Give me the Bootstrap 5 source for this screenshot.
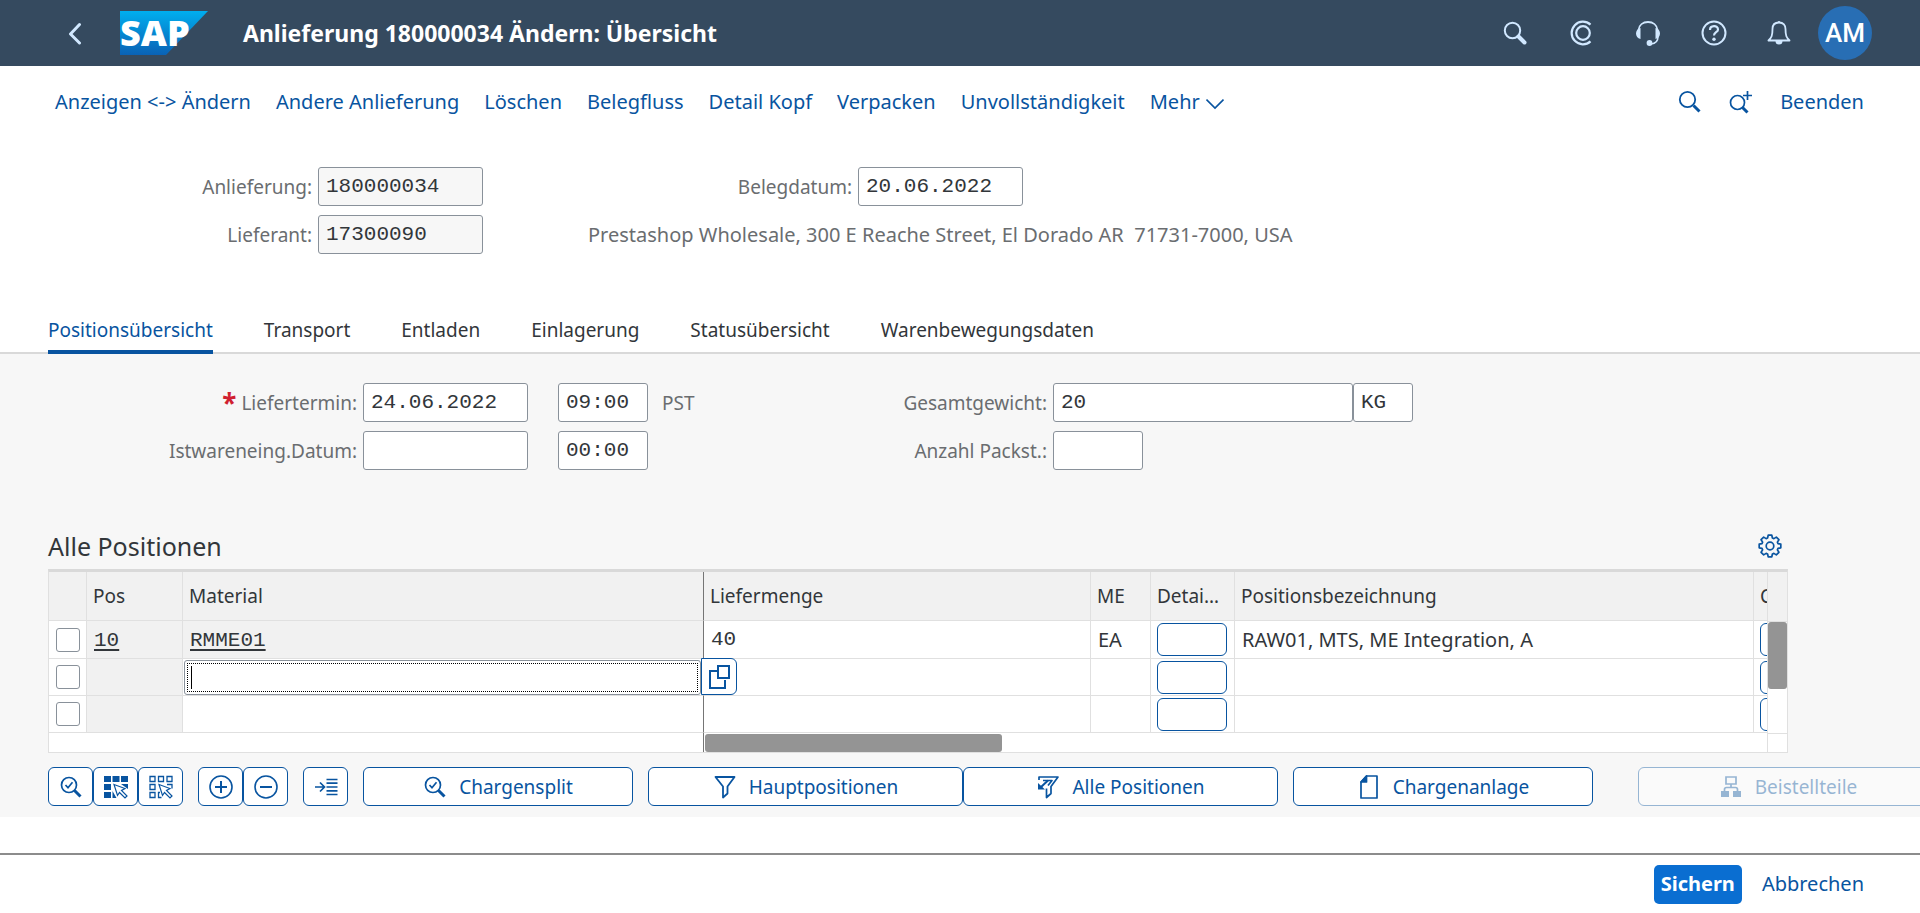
<!DOCTYPE html>
<html lang="de">
<head>
<meta charset="utf-8">
<meta name="viewport" content="width=device-width, initial-scale=1">
<title>Anlieferung 180000034 Ändern: Übersicht</title>
<link href="https://cdn.jsdelivr.net/npm/bootstrap@5.3.0/dist/css/bootstrap.min.css" rel="stylesheet">
<style>
:root { --brand: #0854a0; --ink: #32363a; --soft: #6a6d70; --line: #e0e0e0; --edge: #89919a; }
body { font-family: "Noto Sans", "Liberation Sans", sans-serif; font-size: 19px; line-height: 24px; color: var(--ink); background: #fff; overflow-x: hidden; }
svg { display: block; flex: none; }
a { color: var(--brand); text-decoration: none; white-space: nowrap; }
label, .soft { color: var(--soft); white-space: nowrap; }
.shell { background: #354a5f; height: 66px; padding: 0 48px 0 63px; color: #d1e8ff; }
.shell h1 { font-size: 23px; line-height: 30px; font-weight: 700; color: #fff; margin: 0 0 0 35px; }
.shell button { border: 0; background: none; padding: 0; color: #d1e8ff; }
.logo { margin-left: 33px; overflow: visible; }
.tools { gap: 42px; }
.tools-end { gap: 27px; }
.tool { width: 24px; }
.shell .avatar { width: 54px; height: 54px; border-radius: 50%; background: #286eb4; color: #fff; font-family: Roboto, sans-serif; font-size: 26px; font-weight: 500; }
.menu, .address, .items td, .foot { font-size: 20px; }
.menu { height: 72px; padding: 0 56px 0 55px; }
.menu-links { gap: 25px; }
.menu button { border: 0; background: none; padding: 0; color: var(--brand); }
.menu .more { gap: 6px; }
.menu .next { margin: 0 26px; }
.fields { display: grid; gap: 9px 6px; align-items: center; padding-left: 48px; }
.fields label { text-align: right; }
.fields-head { grid-template-columns: 264px 165px 363px 165px; padding-top: 29px; padding-bottom: 46px; }
.address { grid-column: 3 / 5; padding-left: 99px; white-space: pre; }
.fields-item { grid-template-columns: 309px 165px 114px 60px 327px 1fr; padding-top: 29px; padding-bottom: 56px; }
.fld { height: 39px; width: 165px; border: 1px solid var(--edge); border-radius: 3px; padding: 0 7px; font: 21px/37px "Liberation Mono", monospace; color: var(--ink); background: #fff; }
.fld[readonly] { background: #f7f7f7; }
.fld.time { width: 90px; justify-self: end; }
.fld.long { width: 300px; }
.fld.short { width: 90px; }
.fld.unit { width: 60px; }
.star { color: #d02030; font-weight: 700; font-size: 26px; line-height: 20px; vertical-align: -3px; }
.tabs { gap: 51px; padding: 0 48px; border-bottom: 2px solid #d9d9d9; }
.tabs a { color: var(--ink); height: 54px; padding: 18px 0 0; margin-bottom: -2px; border-bottom: 4px solid transparent; }
.tabs a.active { color: var(--brand); border-color: var(--brand); }
.panel { background: #f7f7f7; padding-bottom: 11px; }
.grid-area { padding: 0 132px 0 48px; }
.grid-title { height: 40px; padding-right: 6px; margin-bottom: 3px; }
.grid-title h2 { font-size: 25px; line-height: 32px; font-weight: 400; margin: 0; }
.grid-title button { border: 0; background: none; padding: 0; color: var(--brand); }
.grid-box { border: 1px solid var(--line); border-top: 3px solid #d9d9d9; background: #fff; }
.grid-main { flex: 1; min-width: 0; overflow: hidden; }
.items { table-layout: fixed; width: 100%; border-collapse: separate; border-spacing: 0; }
.items th, .items td { border-right: 1px solid var(--line); border-bottom: 1px solid var(--line); padding: 0 7px; height: 37px; font-weight: 400; white-space: nowrap; overflow: hidden; }
.items th { background: #f1f1f1; height: 49px; padding: 0 6px; text-overflow: ellipsis; }
.items tr:first-child td { height: 38px; }
.items th:nth-child(3), .items td:nth-child(3) { border-right-color: #757575; }
.items th:last-child, .items td:last-child { border-right: 0; text-overflow: clip; padding-right: 0; }
.items .locked { background: #f1f1f1; }
.items a, .items .num { font: 21px/24px "Liberation Mono", monospace; color: var(--ink); }
.items a { text-decoration: underline; text-decoration-thickness: 2px; text-underline-offset: 3px; }
.items .form-check-input { display: block; width: 24px; height: 24px; margin: 0; border: 1px solid var(--edge); border-radius: 3px; }
.items td.pick { padding: 0 0 0 7px; }
.items td.btn-cell { padding: 0 6px; }
.items td.entry { position: relative; overflow: visible; padding: 0 1px; }
.entry input { display: block; width: 517px; height: 35px; border: 1px solid var(--edge); border-radius: 3px; padding: 0 6px; font: 21px/24px "Liberation Mono", monospace; outline: 1px dotted #000; outline-offset: -4px; caret-color: transparent; background: linear-gradient(#000, #000) 6px center / 1px 23px no-repeat #fff; }
.entry button { position: absolute; right: -34px; top: -1px; width: 36px; height: 37px; padding: 0; border: 1px solid var(--brand); border-radius: 0 6px 6px 0; background: #fff; color: var(--brand); z-index: 2; display: flex; align-items: center; justify-content: center; }
.cell-btn { display: block; width: 70px; height: 33px; border: 1px solid var(--brand); border-radius: 6px; background: #fff; padding: 0; }
.hbar { height: 19px; }
.hbar-left { width: 655px; border-right: 1px solid #757575; }
.thumb-h { width: 297px; height: 18px; margin: 1px 0 0 1px; border-radius: 3px; background: #949494; }
.vbar { width: 20px; border-left: 1px solid var(--line); }
.vbar-head { height: 50px; background: #f1f1f1; border-bottom: 1px solid var(--line); }
.vbar-track { height: 112px; border-bottom: 1px solid var(--line); }
.thumb-v { height: 67px; border-radius: 3px; background: #949494; }
.actions { padding: 14px 0 0 48px; gap: 15px; overflow: hidden; }
.act { height: 39px; border: 1px solid var(--brand); border-radius: 6px; background: #fff; color: var(--brand); padding: 0; display: inline-flex; align-items: center; justify-content: center; gap: 12px; flex: none; }
.act-icon { width: 45px; }
.act-270 { width: 270px; } .act-300 { width: 300px; } .act-315 { width: 315px; }
.act:disabled { opacity: .4; color: var(--brand); }
.act-late { margin-left: 30px; }
.foot { border-top: 2px solid #8c8c8c; height: 60px; padding: 0 56px 0 48px; gap: 20px; }
.save { height: 39px; padding: 0 7px; border: 0; border-radius: 5px; background: #0a6ed1; color: #fff; font-weight: 700; }
</style>
</head>
<body class="d-flex flex-column min-vh-100">

<header class="shell d-flex align-items-center">
  <button type="button" aria-label="Zurück"><svg width="24" height="24" viewBox="0 0 24 24" fill="none" stroke="currentColor" stroke-width="3" stroke-linecap="round" stroke-linejoin="round"><path d="M16.500 3.500 7.500 13l9 9"/></svg></button>
  <svg class="logo" width="88" height="44" viewBox="0 0 88 44" role="img" aria-label="SAP">
    <defs><linearGradient id="logo" x1="0" y1="0" x2="0" y2="1"><stop offset="0" stop-color="#00aeef"/><stop offset="1" stop-color="#0a62b5"/></linearGradient></defs>
    <path d="M0 0h88L46 44H0z" fill="url(#logo)"/>
    <text x="0" y="35" font-family="Noto Sans, sans-serif" font-weight="900" font-size="36" fill="#fff">SAP</text>
  </svg>
  <h1>Anlieferung 180000034 Ändern: Übersicht</h1>
  <div class="tools d-flex align-items-center ms-auto">
    <button class="tool" type="button" aria-label="Suchen"><svg width="24" height="24" viewBox="0 0 24 24" fill="none" stroke="currentColor"><circle cx="9.500" cy="9.500" r="7.700" stroke-width="2"/><path d="m15.500 15.500 6 6" stroke-width="4" stroke-linecap="round"/></svg></button>
    <button class="tool" type="button" aria-label="CoPilot"><svg width="24" height="26" viewBox="0 0 24 26" fill="none" stroke="currentColor" stroke-width="2.200"><circle cx="14" cy="13" r="6.800"/><path d="M21.500 4.600A11.300 11.300 0 1 0 21.500 21.400"/></svg></button>
    <button class="tool" type="button" aria-label="Support"><svg width="26" height="26" viewBox="0 0 26 26" fill="none" stroke="currentColor"><path d="M3.500 10C4 5 8 2 13 2s9 3 9.500 8" stroke-width="1.800"/><path d="M5.500 8v11C2.500 18.500 1 16 1 13.500S2.500 8.500 5.500 8zM20.500 8v11c3-.5 4.500-3 4.500-5.500S23.500 8.500 20.500 8z" fill="currentColor" stroke="none"/><path d="M23 17c0 4-3 6.500-7 7" stroke-width="1.500"/><circle cx="14.500" cy="23" r="2.900" fill="currentColor" stroke="none"/></svg></button>
    <button class="tool" type="button" aria-label="Hilfe"><svg width="26" height="26" viewBox="0 0 26 26" fill="none" stroke="currentColor"><circle cx="13" cy="13" r="11.500" stroke-width="2"/><path d="M9 10c0-5 8-5 8-.6 0 3-4 2.700-4 6.100" stroke-width="2.200"/><circle cx="13" cy="19.200" r="1.700" fill="currentColor" stroke="none"/></svg></button>
    <div class="tools-end d-flex align-items-center">
      <button class="tool" type="button" aria-label="Benachrichtigungen"><svg width="24" height="26" viewBox="0 0 24 26" fill="none" stroke="currentColor" stroke-width="1.800" stroke-linejoin="round"><path d="M12 2.500c-4.500 0-6.500 3-6.500 6.500 0 7-1 8.500-4 11.500h21c-3-3-4-4.500-4-11.500 0-3.500-2-6.500-6.500-6.500z"/><path d="M8.500 21h7a3.500 3.500 0 0 1-7 0zM10.500 2.500a1.500 1.500 0 0 1 3 0z" fill="currentColor" stroke="none"/></svg></button>
      <button class="avatar" type="button">AM</button>
    </div>
  </div>
</header>

<nav class="menu d-flex align-items-center">
  <div class="menu-links d-flex">
    <a href="#">Anzeigen &lt;-&gt; Ändern</a><a href="#">Andere Anlieferung</a><a href="#">Löschen</a><a href="#">Belegfluss</a><a href="#">Detail Kopf</a><a href="#">Verpacken</a><a href="#">Unvollständigkeit</a>
    <button class="more d-flex align-items-center" type="button">Mehr<svg width="18" height="18" viewBox="0 0 18 18" fill="none" stroke="currentColor" stroke-width="1.600"><path d="m.5 6.500 8.500 8.500 8.500-8.500"/></svg></button>
  </div>
  <div class="d-flex align-items-center ms-auto">
    <button type="button" aria-label="Suchen"><svg width="24" height="24" viewBox="0 0 24 24" fill="none" stroke="currentColor"><circle cx="9.500" cy="9.500" r="7.700" stroke-width="1.800"/><path d="m15.500 15.500 6 6" stroke-width="3"/></svg></button>
    <button class="next" type="button" aria-label="Weiter suchen"><svg width="26" height="26" viewBox="0 0 26 26" fill="none" stroke="currentColor"><circle cx="9.500" cy="13.500" r="7" stroke-width="1.700"/><path d="m14.500 18.500 5 5" stroke-width="3"/><path d="M19.500 2v9M15 6.500h9" stroke-width="1.700"/></svg></button>
    <a href="#">Beenden</a>
  </div>
</nav>

<main>
  <form class="fields fields-head">
    <label for="anl">Anlieferung:</label><input class="fld" id="anl" value="180000034" readonly>
    <label for="bel">Belegdatum:</label><input class="fld" id="bel" value="20.06.2022">
    <label for="lif">Lieferant:</label><input class="fld" id="lif" value="17300090" readonly>
    <span class="soft address">Prestashop Wholesale, 300 E Reache Street, El Dorado AR  71731-7000, USA</span>
  </form>

  <nav class="tabs d-flex">
    <a class="active" href="#">Positionsübersicht</a><a href="#">Transport</a><a href="#">Entladen</a><a href="#">Einlagerung</a><a href="#">Statusübersicht</a><a href="#">Warenbewegungsdaten</a>
  </nav>

  <section class="panel">
    <form class="fields fields-item">
      <label for="lt"><span class="star">*</span> Liefertermin:</label><input class="fld" id="lt" value="24.06.2022">
      <input class="fld time" aria-label="Uhrzeit" value="09:00"><span class="soft ps-2">PST</span>
      <label for="gw">Gesamtgewicht:</label><div class="d-flex"><input class="fld long" id="gw" value="20"><input class="fld unit" aria-label="Einheit" value="KG"></div>
      <label for="iw">Istwareneing.Datum:</label><input class="fld" id="iw">
      <input class="fld time" aria-label="Uhrzeit" value="00:00"><span></span>
      <label for="ap">Anzahl Packst.:</label><input class="fld short" id="ap">
    </form>

    <div class="grid-area">
      <div class="grid-title d-flex align-items-center justify-content-between">
        <h2>Alle Positionen</h2>
        <button type="button" aria-label="Einstellungen"><svg width="24" height="24" viewBox="0 0 24 24" fill="none" stroke="currentColor" stroke-width="1.700" stroke-linejoin="round"><circle cx="12" cy="12" r="3.800"/><path d="M10.200 1.200h3.600l.6 2.800 1.500.6 2.400-1.500 2.600 2.600-1.500 2.400.6 1.500 2.800.6v3.600l-2.800.6-.6 1.500 1.500 2.400-2.600 2.600-2.400-1.500-1.500.6-.6 2.800h-3.600l-.6-2.800-1.500-.6-2.400 1.500-2.600-2.600 1.500-2.400-.6-1.500-2.800-.6v-3.600l2.800-.6.6-1.500-1.500-2.400 2.600-2.600 2.400 1.500 1.500-.6z"/></svg></button>
      </div>
      <div class="grid-box d-flex">
        <div class="grid-main">
          <table class="items">
            <colgroup><col style="width:38px"><col style="width:96px"><col style="width:521px"><col style="width:387px"><col style="width:60px"><col style="width:84px"><col><col style="width:13px"></colgroup>
            <thead><tr><th></th><th>Pos</th><th>Material</th><th>Liefermenge</th><th>ME</th><th>Detai…</th><th>Positionsbezeichnung</th><th>C</th></tr></thead>
            <tbody>
              <tr><td class="pick"><input class="form-check-input" type="checkbox" aria-label="Position 10"></td><td class="locked"><a href="#">10</a></td><td class="locked"><a href="#">RMME01</a></td><td class="num">40</td><td>EA</td><td class="btn-cell"><button class="cell-btn" type="button" aria-label="Detail"></button></td><td>RAW01, MTS, ME Integration, A</td><td class="btn-cell"><button class="cell-btn" type="button" aria-label="Detail"></button></td></tr>
              <tr><td class="pick"><input class="form-check-input" type="checkbox" aria-label="Zeile 2"></td><td class="locked"></td><td class="entry"><input type="text" aria-label="Material"><button type="button" aria-label="Wertehilfe"><svg width="24" height="26" viewBox="0 0 24 26" fill="none" stroke="currentColor" stroke-width="2"><path d="M10 7H3v17h15v-8"/><path d="M11 2h11v12H11z"/></svg></button></td><td></td><td></td><td class="btn-cell"><button class="cell-btn" type="button" aria-label="Detail"></button></td><td></td><td class="btn-cell"><button class="cell-btn" type="button" aria-label="Detail"></button></td></tr>
              <tr><td class="pick"><input class="form-check-input" type="checkbox" aria-label="Zeile 3"></td><td class="locked"></td><td></td><td></td><td></td><td class="btn-cell"><button class="cell-btn" type="button" aria-label="Detail"></button></td><td></td><td class="btn-cell"><button class="cell-btn" type="button" aria-label="Detail"></button></td></tr>
            </tbody>
          </table>
          <div class="hbar d-flex"><div class="hbar-left"></div><div class="thumb-h"></div></div>
        </div>
        <div class="vbar"><div class="vbar-head"></div><div class="vbar-track"><div class="thumb-v"></div></div></div>
      </div>
    </div>

    <div class="actions d-flex">
      <div class="d-flex">
        <button class="act act-icon" type="button" aria-label="Details"><svg width="24" height="24" viewBox="0 0 24 24" fill="none" stroke="currentColor"><circle cx="10" cy="10" r="7.500" stroke-width="1.700"/><path d="m15.500 15.500 6 6" stroke-width="3"/><path d="m6.500 10 2.500 2.800 4.500-5.500" stroke-width="1.700"/></svg></button>
        <button class="act act-icon" type="button" aria-label="Alle markieren"><svg width="26" height="24" viewBox="0 0 26 24" fill="currentColor"><path d="M1 1h7v6H1zM9.500 1h7v6h-7zM18 1h7v6h-7zM1 9h7v6H1zM1 17h7v6H1zM9.500 16l4 7h-4zM18 9h7v5z"/><path d="m11 9.500 11 4-3.500 2 5.500 5.500-2 2-5.500-5.500-2 3z" fill="#fff" stroke="currentColor" stroke-width="1.200"/></svg></button>
        <button class="act act-icon" type="button" aria-label="Markierung aufheben"><svg width="26" height="24" viewBox="0 0 26 24" fill="none" stroke="currentColor" stroke-width="1.300"><path d="M2 1.500h5v5H2zM10.500 1.500h5v5h-5zM19 1.500h5v5h-5zM2 9.500h5v5H2zM2 17.500h5v5H2zM12 17.500h-1.500v5h3M19 9.500h5v4"/><path d="m11 9.500 11 4-3.500 2 5.500 5.500-2 2-5.500-5.500-2 3z" fill="#fff" stroke-width="1.200"/></svg></button>
      </div>
      <div class="d-flex">
        <button class="act act-icon" type="button" aria-label="Hinzufügen"><svg width="24" height="24" viewBox="0 0 24 24" fill="none" stroke="currentColor" stroke-width="1.600"><circle cx="12" cy="12" r="11"/><path d="M12 6v12M6 12h12" stroke-width="2"/></svg></button>
        <button class="act act-icon" type="button" aria-label="Entfernen"><svg width="24" height="24" viewBox="0 0 24 24" fill="none" stroke="currentColor" stroke-width="1.600"><circle cx="12" cy="12" r="11"/><path d="M6 12h12" stroke-width="2"/></svg></button>
      </div>
      <button class="act act-icon" type="button" aria-label="Positionieren"><svg width="24" height="20" viewBox="0 0 24 20" fill="none" stroke="currentColor" stroke-width="1.700"><path d="M1 10h9M6 5.500l4.500 4.500L6 14.500M12.500 2.500h11M12.500 6.200h11M12.500 10h11M12.500 13.800h11M12.500 17.500h11"/></svg></button>
      <button class="act act-270" type="button"><svg width="24" height="24" viewBox="0 0 24 24" fill="none" stroke="currentColor"><circle cx="10" cy="10" r="7.500" stroke-width="1.700"/><path d="m15.500 15.500 6 6" stroke-width="3"/><path d="m6.500 10 2.500 2.800 4.500-5.500" stroke-width="1.700"/></svg>Chargensplit</button>
      <div class="d-flex">
        <button class="act act-315" type="button"><svg width="24" height="24" viewBox="0 0 24 24" fill="none" stroke="currentColor" stroke-width="1.800" stroke-linejoin="round"><path d="M2.500 2h19l-7 9.500v7L10 22.500v-11z"/></svg>Hauptpositionen</button>
        <button class="act act-315" type="button"><svg width="24" height="24" viewBox="0 0 24 24" fill="none" stroke="currentColor" stroke-width="1.700" stroke-linejoin="round"><path d="M3 5V2h19l-7 9.500v7l-4.500 4v-9M7 5.500h9l-4 5"/><path d="M12 5.500 5 12" stroke-width="2"/><path d="M2 8v6.500h7z" fill="currentColor" stroke="none"/></svg>Alle Positionen</button>
      </div>
      <button class="act act-300" type="button"><svg width="24" height="24" viewBox="0 0 24 24" fill="none" stroke="currentColor" stroke-width="1.700" stroke-linejoin="round"><path d="M9.500 1H20v22H4V7z"/><path d="M9.500 1v6H4z" fill="currentColor"/></svg>Chargenanlage</button>
      <button class="act act-300 act-late" type="button" disabled><svg width="24" height="24" viewBox="0 0 24 24" fill="none" stroke="currentColor" stroke-width="1.700"><path d="M7 2h10v7H7zM12 9v3.500M5.500 16v-1.500q0-2 2-2h9q2 0 2 2V16"/><path d="M2 16h8v6H2zM14 16h8v6h-8z" fill="currentColor" stroke="none"/></svg>Beistellteile</button>
    </div>
  </section>
</main>

<footer class="foot d-flex align-items-center justify-content-end mt-auto">
  <button class="save" type="button">Sichern</button>
  <a href="#">Abbrechen</a>
</footer>
<script src="https://cdn.jsdelivr.net/npm/bootstrap@5.3.0/dist/js/bootstrap.bundle.min.js"></script>
</body>
</html>
